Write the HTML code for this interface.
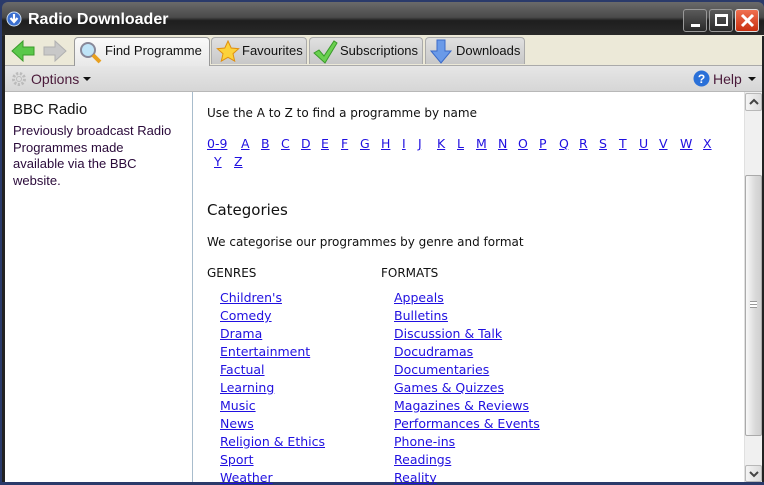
<!DOCTYPE html>
<html><head><meta charset="utf-8"><style>
*{margin:0;padding:0;box-sizing:border-box}
body{width:764px;height:482px;overflow:hidden;background:#2a3a6a;font-family:"Liberation Sans",sans-serif;position:relative}
.abs{position:absolute}
#title{left:2px;top:2px;width:762px;height:34px;background:linear-gradient(#6a6a6a,#4a4a4a 45%,#1e1e1e 55%,#2a2a2a);border-radius:6px 6px 0 0}
#title .t{left:26px;top:9px;color:#fff;font-weight:bold;font-size:16px}
.wb{top:7px;width:24px;height:23px;border:1px solid #999;border-radius:3px;background:linear-gradient(#5a5a5a,#2a2a2a)}
#frame{left:2px;top:36px;width:762px;height:446px;background:#222}
#tabs{left:5px;top:35px;width:759px;height:31px;background:#ece9d8;border-bottom:1px solid #aaa}
.tab{top:2px;height:27px;border:1px solid #aaa;border-bottom:none;border-radius:4px 4px 0 0;background:linear-gradient(#e0e0e0,#c8c8c8);font-size:13px;color:#111;padding-left:30px;line-height:25px}
.tab.act{background:linear-gradient(#fafafa,#e8e8e8);height:30px;border-color:#999}
#tool{left:5px;top:66px;width:759px;height:26px;background:linear-gradient(#e6e6e6,#d6d6d6);border-bottom:1px solid #b8b8b8;font-size:14px;color:#4a1a3a}
#left{left:5px;top:92px;width:188px;height:390px;background:#fff;border-right:1px solid #a8bccc}
#main{left:193px;top:92px;width:551px;height:390px;background:#fff;font-family:"DejaVu Sans",sans-serif;font-size:12px;color:#111}
a{color:#2010e0;text-decoration:underline}
.lk{position:absolute;font-size:12.5px}
#sb{left:744px;top:92px;width:18px;height:390px;background:#f0f0f0;border-left:1px solid #e0e0e0}
</style></head><body>
<div id="frame" class="abs"></div>
<div id="title" class="abs">
 <svg class="abs" style="left:4px;top:9px" width="16" height="16"><circle cx="8" cy="8" r="7" fill="#3a6fd0" stroke="#cde" stroke-width="1"/><path d="M8 3v7M4.5 7l3.5 4 3.5-4" stroke="#fff" stroke-width="2.2" fill="none"/></svg>
 <div class="abs t">Radio Downloader</div>
 <div class="abs wb" style="left:681px"><div class="abs" style="left:7px;top:14px;width:9px;height:3px;background:#fff"></div></div>
 <div class="abs wb" style="left:707px"><div class="abs" style="left:5px;top:4px;width:13px;height:12px;border:2px solid #fff;border-top-width:3px"></div></div>
 <div class="abs wb" style="left:733px;background:linear-gradient(#f07050,#c83010);border-color:#ddd"><svg class="abs" style="left:4px;top:3px" width="15" height="15"><path d="M2 2L13 13M13 2L2 13" stroke="#fff" stroke-width="3"/></svg></div>
</div>
<div id="tabs" class="abs">
 <svg class="abs" style="left:6px;top:4px" width="58" height="24"><path d="M1 12L12 2v6h11v8H12v6z" fill="#5ac84a" stroke="#3a9a2a"/><path d="M55 12L44 2v6H33v8h11v6z" fill="#c8c8c8" stroke="#b0b0b0"/></svg>
 <div class="abs tab act" style="left:69px;width:136px"><svg class="abs" style="left:4px;top:3px" width="24" height="24"><circle cx="9" cy="9" r="7" fill="#bfe4f8" stroke="#889" stroke-width="2"/><path d="M14 14l7 7" stroke="#e8a020" stroke-width="4"/></svg>Find Programme</div>
 <div class="abs tab" style="left:206px;width:96px"><svg class="abs" style="left:4px;top:2px" width="24" height="24"><path d="M12 1l3.2 7 7.5.7-5.7 5 1.7 7.4L12 17.3 5.3 21.1 7 13.7 1.3 8.7 8.8 8z" fill="#fcd23a" stroke="#e09010"/></svg>Favourites</div>
 <div class="abs tab" style="left:304px;width:114px"><svg class="abs" style="left:2px;top:1px" width="26" height="26"><path d="M2 14l5-3 5 6L22 2l3 2-12 20z" fill="#6ad050" stroke="#3a9a2a"/></svg>Subscriptions</div>
 <div class="abs tab" style="left:420px;width:100px"><svg class="abs" style="left:3px;top:1px" width="24" height="26"><path d="M8 1h8v11h6L12 24 2 12h6z" fill="#6a9ae8" stroke="#3a6ac8"/></svg>Downloads</div>
</div>
<div id="tool" class="abs">
 <svg class="abs" style="left:6px;top:5px" width="16" height="16"><circle cx="8" cy="8" r="5.5" fill="none" stroke="#bbb" stroke-width="3" stroke-dasharray="2.2 1.6"/><circle cx="8" cy="8" r="2.5" fill="none" stroke="#bbb"/></svg>
 <div class="abs" style="left:26px;top:5px">Options</div>
 <div class="abs" style="left:78px;top:11px;border:4px solid transparent;border-top:4px solid #111"></div>
 <svg class="abs" style="left:688px;top:4px" width="17" height="17"><circle cx="8.5" cy="8.5" r="8" fill="#2a70d8"/><text x="8.5" y="13" font-size="12" font-weight="bold" fill="#fff" text-anchor="middle" font-family="Liberation Sans">?</text></svg>
 <div class="abs" style="left:708px;top:5px">Help</div>
 <div class="abs" style="left:743px;top:11px;border:4px solid transparent;border-top:4px solid #111"></div>
</div>
<div id="left" class="abs">
 <div class="abs" style="left:8px;top:9px;font-size:15px;color:#111">BBC Radio</div>
 <div class="abs" style="left:8px;top:31px;width:172px;font-size:13px;line-height:16.5px;color:#2a0a3a">Previously broadcast Radio<br>Programmes made<br>available via the BBC<br>website.</div>
</div>
<div id="main" class="abs">
 <div class="abs" style="left:14px;top:14px">Use the A to Z to find a programme by name</div>
 <div class="abs" style="left:14px;top:109px;font-size:15px">Categories</div>
 <div class="abs" style="left:14px;top:143px">We categorise our programmes by genre and format</div>
 <div class="abs" style="left:14px;top:174px">GENRES</div>
 <div class="abs" style="left:188px;top:174px">FORMATS</div>
 <a class="lk" style="left:27px;top:198px">Children's</a><a class="lk" style="left:27px;top:216px">Comedy</a><a class="lk" style="left:27px;top:234px">Drama</a><a class="lk" style="left:27px;top:252px">Entertainment</a><a class="lk" style="left:27px;top:270px">Factual</a><a class="lk" style="left:27px;top:288px">Learning</a><a class="lk" style="left:27px;top:306px">Music</a><a class="lk" style="left:27px;top:324px">News</a><a class="lk" style="left:27px;top:342px">Religion &amp; Ethics</a><a class="lk" style="left:27px;top:360px">Sport</a><a class="lk" style="left:27px;top:378px">Weather</a>
 <a class="lk" style="left:201px;top:198px">Appeals</a><a class="lk" style="left:201px;top:216px">Bulletins</a><a class="lk" style="left:201px;top:234px">Discussion &amp; Talk</a><a class="lk" style="left:201px;top:252px">Docudramas</a><a class="lk" style="left:201px;top:270px">Documentaries</a><a class="lk" style="left:201px;top:288px">Games &amp; Quizzes</a><a class="lk" style="left:201px;top:306px">Magazines &amp; Reviews</a><a class="lk" style="left:201px;top:324px">Performances &amp; Events</a><a class="lk" style="left:201px;top:342px">Phone-ins</a><a class="lk" style="left:201px;top:360px">Readings</a><a class="lk" style="left:201px;top:378px">Reality</a>
 <a class="lk" style="left:14px;top:44px">0-9</a>
 <a class="lk" style="left:48px;top:44px">A</a><a class="lk" style="left:68px;top:44px">B</a><a class="lk" style="left:88px;top:44px">C</a><a class="lk" style="left:108px;top:44px">D</a><a class="lk" style="left:128px;top:44px">E</a><a class="lk" style="left:148px;top:44px">F</a><a class="lk" style="left:167px;top:44px">G</a><a class="lk" style="left:188px;top:44px">H</a><a class="lk" style="left:209px;top:44px">I</a><a class="lk" style="left:225px;top:44px">J</a><a class="lk" style="left:244px;top:44px">K</a><a class="lk" style="left:264px;top:44px">L</a><a class="lk" style="left:283px;top:44px">M</a><a class="lk" style="left:305px;top:44px">N</a><a class="lk" style="left:325px;top:44px">O</a><a class="lk" style="left:346px;top:44px">P</a><a class="lk" style="left:366px;top:44px">Q</a><a class="lk" style="left:386px;top:44px">R</a><a class="lk" style="left:406px;top:44px">S</a><a class="lk" style="left:426px;top:44px">T</a><a class="lk" style="left:446px;top:44px">U</a><a class="lk" style="left:466px;top:44px">V</a><a class="lk" style="left:487px;top:44px">W</a><a class="lk" style="left:510px;top:44px">X</a>
 <a class="lk" style="left:21px;top:62px">Y</a><a class="lk" style="left:41px;top:62px">Z</a>
</div>
<div id="sb" class="abs">
 <div class="abs" style="left:0;top:1px;width:17px;height:18px;border:1px solid #b8b8b8;border-radius:2px;background:linear-gradient(90deg,#f4f4f4,#dcdcdc)"><svg class="abs" style="left:3px;top:4px" width="10" height="8"><path d="M1 6l4-4 4 4" stroke="#444" stroke-width="2" fill="none"/></svg></div>
 <div class="abs" style="left:0;top:83px;width:17px;height:261px;border:1px solid #aaa;border-radius:2px;background:linear-gradient(90deg,#f8f8f8,#dadada 60%,#cfcfcf)"><div class="abs" style="left:4px;top:125px;width:7px;height:7px;border-top:1px solid #999;border-bottom:1px solid #999;background:linear-gradient(#fff 40%,#999 40%,#999 60%,#fff 60%)"></div></div>
 <div class="abs" style="left:0;top:373px;width:17px;height:17px;border:1px solid #b8b8b8;border-radius:2px;background:linear-gradient(90deg,#f4f4f4,#dcdcdc)"><svg class="abs" style="left:3px;top:4px" width="10" height="8"><path d="M1 2l4 4 4-4" stroke="#444" stroke-width="2" fill="none"/></svg></div>
</div>
<div class="abs" style="left:762px;top:36px;width:2px;height:446px;background:#222"></div>
</body></html>
